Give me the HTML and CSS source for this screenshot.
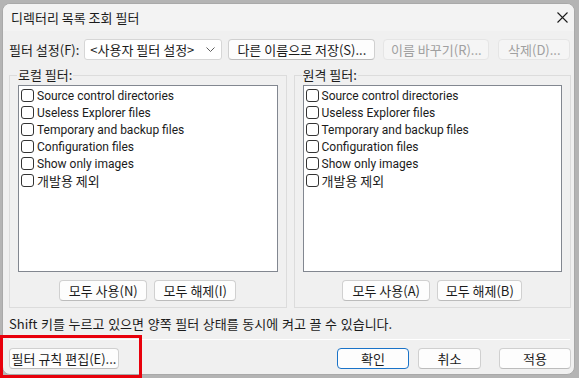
FILE: index.html
```html
<!DOCTYPE html>
<html>

<head>
    <meta charset="utf-8">
    <title>디렉터리 목록 조회 필터</title>
    <link rel="stylesheet" href="styles.css">
</head>

<body>

<div class="window">
    <div class="titlebar">
        <span class="title">디렉터리 목록 조회 필터</span>
        <svg class="close" width="11" height="11" viewBox="0 0 11 11">
            <path d="M0.5 0.5 L10.5 10.5 M10.5 0.5 L0.5 10.5" stroke="#1b1b1b" stroke-width="1.1" fill="none"/>
        </svg>
    </div>

    <div class="content">
        <div class="filter-row">
            <span class="label">필터 설정(F):</span>
            <div class="combo">
                <span>&lt;사용자 필터 설정&gt;</span>
                <svg width="9" height="5" viewBox="0 0 9 5">
                    <path d="M0.5 0.5 L4.5 4.5 L8.5 0.5" stroke="#5c5c5c" stroke-width="1" fill="none"/>
                </svg>
            </div>
            <button class="btn save">다른 이름으로 저장(S)...</button>
            <button class="btn rename" disabled>이름 바꾸기(R)...</button>
            <button class="btn delete" disabled>삭제(D)...</button>
        </div>

        <div class="groups">
            <fieldset class="group">
                <legend>로컬 필터:</legend>
                <div class="list">
                    <label class="item en"><span class="check"></span>Source control directories</label>
                    <label class="item en"><span class="check"></span>Useless Explorer files</label>
                    <label class="item en"><span class="check"></span>Temporary and backup files</label>
                    <label class="item en"><span class="check"></span>Configuration files</label>
                    <label class="item en"><span class="check"></span>Show only images</label>
                    <label class="item"><span class="check"></span>개발용 제외</label>
                </div>
                <div class="group-buttons">
                    <button class="btn all-on">모두 사용(N)</button>
                    <button class="btn all-off">모두 해제(I)</button>
                </div>
            </fieldset>

            <fieldset class="group">
                <legend>원격 필터:</legend>
                <div class="list">
                    <label class="item en"><span class="check"></span>Source control directories</label>
                    <label class="item en"><span class="check"></span>Useless Explorer files</label>
                    <label class="item en"><span class="check"></span>Temporary and backup files</label>
                    <label class="item en"><span class="check"></span>Configuration files</label>
                    <label class="item en"><span class="check"></span>Show only images</label>
                    <label class="item"><span class="check"></span>개발용 제외</label>
                </div>
                <div class="group-buttons">
                    <button class="btn all-on">모두 사용(A)</button>
                    <button class="btn all-off b">모두 해제(B)</button>
                </div>
            </fieldset>
        </div>

        <p class="hint">Shift 키를 누르고 있으면 양쪽 필터 상태를 동시에 켜고 끌 수 있습니다.</p>

        <div class="separator"></div>

        <div class="footer">
            <button class="btn rules">필터 규칙 편집(E)...</button>
            <button class="btn ok">확인</button>
            <button class="btn cancel">취소</button>
            <button class="btn apply">적용</button>
        </div>
    </div>
</div>

<div class="highlight"></div>

</body>

</html>
```

FILE: styles.css
```css
* {
    margin: 0px;
    box-sizing: border-box;
}

body {
    width: 579px;
    height: 378px;
    overflow: hidden;
    position: relative;
    background-color: #b4b4b4;
    font-family: "Noto Sans CJK KR", "Noto Sans", sans-serif;
    font-size: 13px;
    line-height: 16px;
    color: #1b1b1b;
}

.window {
    margin: 3px 4px 0px 2px;
    height: 372px;
    background-color: #f0f0f0;
    border: 1px solid #a9a9a9;
    border-radius: 8px;
    overflow: hidden;
}

.titlebar {
    height: 27px;
    display: flex;
    align-items: center;
    padding: 0px 6px 0px 8px;
    background-color: #f3f3f3;
}

.close {
    margin-left: auto;
}

.content {
    padding: 0px 3px 0px 6px;
}

.btn {
    font-family: inherit;
    font-size: 13px;
    line-height: 16px;
    color: #1b1b1b;
    height: 21px;
    padding: 0px;
    background-color: #fdfdfd;
    border: 1px solid #d0d0d0;
    border-bottom-color: #bcbcbc;
    border-radius: 4px;
}

.btn:disabled {
    color: #a0a0a0;
    background-color: #f5f5f5;
    border-color: #e5e5e5;
}

/* top row */
.filter-row {
    margin-top: 8px;
    display: flex;
    align-items: center;
    height: 21px;
}

.combo {
    margin-left: 5px;
    width: 138px;
    height: 21px;
    display: flex;
    align-items: center;
    justify-content: space-between;
    padding: 0px 6px 0px 5px;
    background-color: #ffffff;
    border: 1px solid #d6d6d6;
    border-radius: 3px;
}

.save {
    margin-left: 6px;
    width: 147px;
}

.rename {
    margin-left: 8px;
    width: 106px;
}

.delete {
    margin-left: 9px;
    width: 72px;
}

/* filter groups */
.groups {
    margin-top: 7px;
    display: flex;
    gap: 7px;
}

.group {
    width: 278px;
    border: 1px solid #dcdcdc;
    padding: 0px 8px 6px 8px;
    min-width: 0px;
}

.group legend {
    padding: 0px 1px;
    margin-left: -1px;
}

.list {
    margin-top: 2px;
    height: 187px;
    background-color: #ffffff;
    border: 1px solid #828790;
    padding: 1px 2px;
}

.item {
    display: flex;
    align-items: center;
    height: 17px;
    gap: 3px;
}

.item.en {
    font-family: Roboto, "Noto Sans", sans-serif;
    font-size: 12px;
    line-height: 14px;
}

.check {
    flex: none;
    width: 13px;
    height: 13px;
    border: 1px solid #333333;
    border-radius: 3px;
    background-color: #ffffff;
}

.group-buttons {
    margin-top: 8px;
    display: flex;
    justify-content: center;
    gap: 7px;
}

.all-on {
    width: 88px;
}

.all-off {
    width: 82px;
}

.all-off.b {
    width: 85px;
}

/* bottom */
.hint {
    margin-top: 8px;
    word-spacing: 0.75px;
}

.separator {
    margin-top: 7px;
    height: 1px;
    background-color: #d4d4d4;
    border-bottom: 1px solid #ffffff;
    margin-right: 1px;
}

.footer {
    margin-top: 8px;
    display: flex;
    align-items: center;
}

.rules {
    width: 110px;
}

.ok {
    margin-left: auto;
    width: 72px;
    border: 1px solid #1a73c8;
}

.cancel {
    margin-left: 9px;
    width: 63px;
}

.apply {
    margin-left: 18px;
    width: 72px;
}

.highlight {
    position: absolute;
    left: 0px;
    top: 335px;
    width: 142px;
    height: 43px;
    border: 3px solid #e8000b;
}
```
